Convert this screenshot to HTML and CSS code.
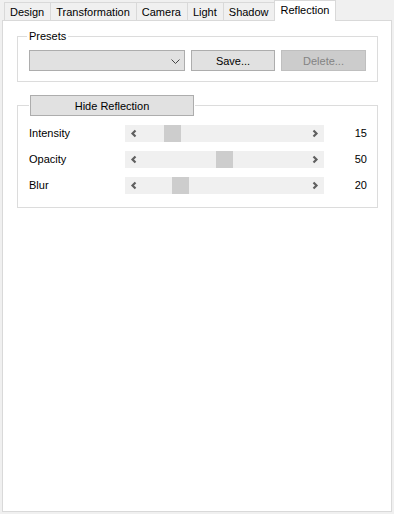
FILE: index.html
```html
<!DOCTYPE html>
<html lang="en">
<head>
    <meta charset="UTF-8">
    <meta name="viewport" content="width=device-width, initial-scale=1.0">
    <title>Reflection</title>
    <link rel="stylesheet" href="styles.css">
</head>
<body>
    <!-- Tab strip -->
    <div class="tabs">
        <div class="tab">Design</div>
        <div class="tab">Transformation</div>
        <div class="tab">Camera</div>
        <div class="tab">Light</div>
        <div class="tab">Shadow</div>
        <div class="tab active">Reflection</div>
    </div>

    <!-- Reflection page -->
    <div class="panel">
        <fieldset class="group presets">
            <legend>Presets</legend>
            <div class="preset-row">
                <div class="combo">
                    <svg width="9" height="5" viewBox="0 0 9 5"><polyline points="0.5,0.5 4.5,4.5 8.5,0.5" fill="none" stroke="#444" stroke-width="1"/></svg>
                </div>
                <button class="btn save">Save...</button>
                <button class="btn delete" disabled>Delete...</button>
            </div>
        </fieldset>

        <fieldset class="group effects">
            <legend><button class="btn toggle">Hide Reflection</button></legend>

            <div class="slider-row">
                <span class="label">Intensity</span>
                <div class="scrollbar">
                    <span class="arrow"><svg width="17" height="17" viewBox="0 0 17 17"><polyline points="10.5,5.5 7.5,8.5 10.5,11.5" fill="none" stroke="#606060" stroke-width="2.2"/></svg></span>
                    <div class="track"><div class="thumb" style="--v:15"></div></div>
                    <span class="arrow"><svg width="17" height="17" viewBox="0 0 17 17"><polyline points="6.5,5.5 9.5,8.5 6.5,11.5" fill="none" stroke="#606060" stroke-width="2.2"/></svg></span>
                </div>
                <span class="value">15</span>
            </div>

            <div class="slider-row">
                <span class="label">Opacity</span>
                <div class="scrollbar">
                    <span class="arrow"><svg width="17" height="17" viewBox="0 0 17 17"><polyline points="10.5,5.5 7.5,8.5 10.5,11.5" fill="none" stroke="#606060" stroke-width="2.2"/></svg></span>
                    <div class="track"><div class="thumb" style="--v:50"></div></div>
                    <span class="arrow"><svg width="17" height="17" viewBox="0 0 17 17"><polyline points="6.5,5.5 9.5,8.5 6.5,11.5" fill="none" stroke="#606060" stroke-width="2.2"/></svg></span>
                </div>
                <span class="value">50</span>
            </div>

            <div class="slider-row">
                <span class="label">Blur</span>
                <div class="scrollbar">
                    <span class="arrow"><svg width="17" height="17" viewBox="0 0 17 17"><polyline points="10.5,5.5 7.5,8.5 10.5,11.5" fill="none" stroke="#606060" stroke-width="2.2"/></svg></span>
                    <div class="track"><div class="thumb" style="--v:20"></div></div>
                    <span class="arrow"><svg width="17" height="17" viewBox="0 0 17 17"><polyline points="6.5,5.5 9.5,8.5 6.5,11.5" fill="none" stroke="#606060" stroke-width="2.2"/></svg></span>
                </div>
                <span class="value">20</span>
            </div>
        </fieldset>
    </div>
</body>
</html>
```

FILE: styles.css
```css
body {
    margin: 0;
    background-color: #f0f0f0;
    font-family: "Liberation Sans", Arial, sans-serif;
    font-size: 11px;
    color: #000;
}

/* tabs */
.tabs {
    display: flex;
    align-items: flex-end;
    height: 20px;
    padding-left: 4px;
}

.tab {
    height: 15px;
    padding: 2px 6px 0 5px;
    line-height: 14px;
    border: 1px solid #d9d9d9;
    border-bottom: 0;
    background-color: #f0f0f0;
    white-space: nowrap;
}

.tab + .tab {
    margin-left: -1px;
}

.tab.active {
    position: relative;
    z-index: 1;
    height: 18px;
    margin: 0 -2px -1px -2px;
    padding: 2px 6px 0;
    background-color: #fff;
}

.panel {
    height: 490px;
    margin: 0 2px;
    border: 1px solid #d9d9d9;
    background-color: #fff;
}

/* group boxes */
.group {
    margin: 0 13px 0 14px;
    border: 1px solid #dcdcdc;
    min-inline-size: 0;
}

.group legend {
    padding: 0 2px;
    margin-left: -2px;
    line-height: 14px;
}

.presets {
    margin-top: 8px;
    padding: 7px 11px 10px 11px;
}

.effects {
    margin-top: 13px;
    padding: 9px 10px 13px 11px;
}

.effects legend {
    padding: 0 1px;
    margin-left: 0;
}

.preset-row {
    display: flex;
    gap: 6px;
}

.combo {
    box-sizing: border-box;
    display: flex;
    align-items: center;
    justify-content: flex-end;
    width: 156px;
    height: 21px;
    padding: 1px 4px 0 0;
    background-color: #e1e1e1;
    border: 1px solid #adadad;
}

.btn {
    box-sizing: border-box;
    height: 21px;
    padding: 0;
    margin: 0;
    font-family: inherit;
    font-size: 11px;
    color: #000;
    background-color: #e1e1e1;
    border: 1px solid #adadad;
}

.save {
    width: 84px;
}

.delete {
    width: 85px;
    color: #838383;
    background-color: #cccccc;
    border-color: #bfbfbf;
}

.toggle {
    display: block;
    width: 164px;
}

/* slider rows */
.slider-row {
    display: grid;
    grid-template-columns: 96px 199px 1fr;
    align-items: center;
    height: 17px;
    line-height: 17px;
}

.slider-row + .slider-row {
    margin-top: 9px;
}

.scrollbar {
    display: flex;
    height: 17px;
    background-color: #f0f0f0;
}

.arrow {
    display: block;
    width: 17px;
    height: 17px;
}

.arrow svg {
    display: block;
}

.track {
    flex: 1;
}

.thumb {
    width: 17px;
    height: 17px;
    background-color: #cdcdcd;
    margin-left: calc((100% - 17px) * var(--v) / 100);
}

.value {
    text-align: right;
}
```
